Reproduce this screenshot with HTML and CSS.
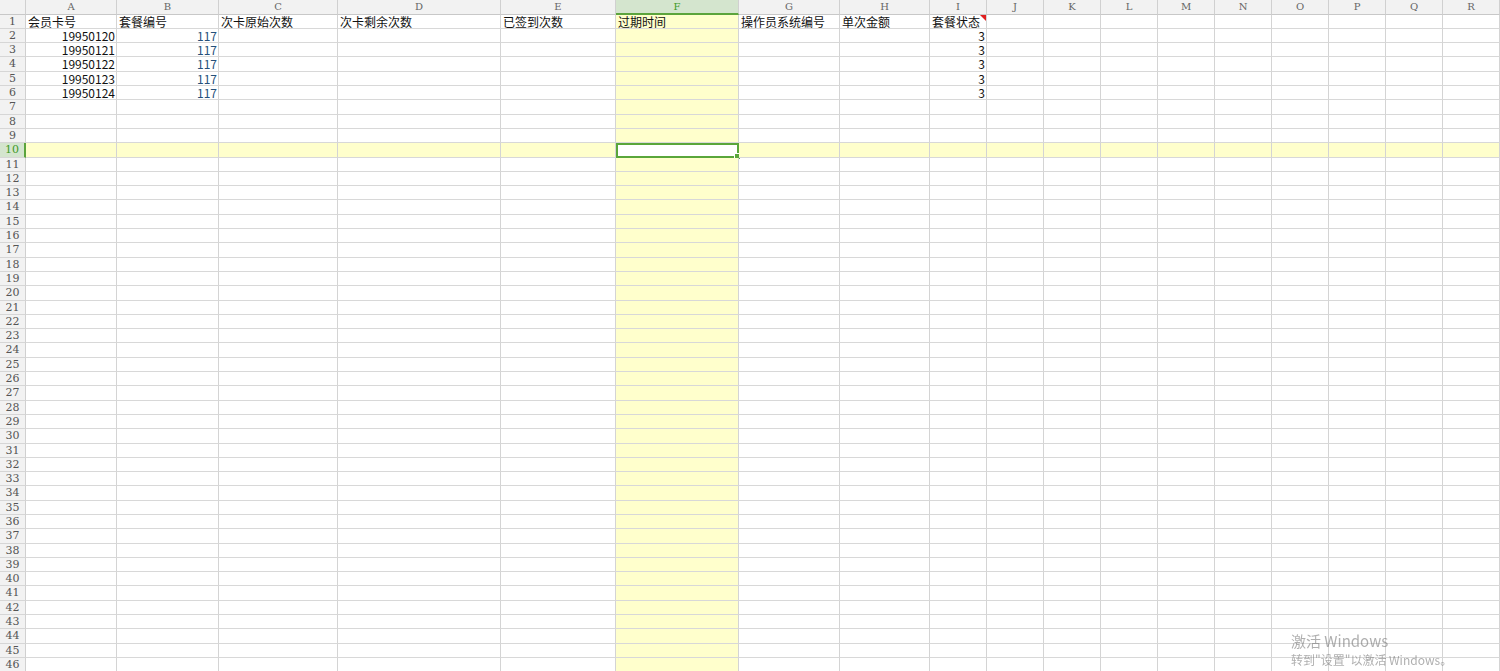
FILE: index.html
```html
<!DOCTYPE html>
<html lang="zh-CN">
<head>
  <meta charset="UTF-8">
  <title>会员套餐表</title>
  <link rel="stylesheet" href="styles.css">
</head>
<body>
<div class="sheet" id="sheet"></div>

<div class="watermark">
  <div class="wm-title">激活 Windows</div>
  <div class="wm-sub">转到"设置"以激活 Windows。</div>
</div>

<script>
  const cols = ["A","B","C","D","E","F","G","H","I","J","K","L","M","N","O","P","Q","R"];
  const header = ["会员卡号","套餐编号","次卡原始次数","次卡剩余次数","已签到次数","过期时间","操作员系统编号","单次金额","套餐状态"];
  const data = [
    ["19950120", "117", "3"],
    ["19950121", "117", "3"],
    ["19950122", "117", "3"],
    ["19950123", "117", "3"],
    ["19950124", "117", "3"]
  ];
  const selCol = 5, selRow = 10;
  const sheet = document.getElementById("sheet");

  function cell(cls, text) {
    const d = document.createElement("div");
    d.className = cls;
    if (text) d.textContent = text;
    sheet.appendChild(d);
    return d;
  }

  // column letters
  cell("corner", "");
  cols.forEach((c, i) => {
    cell("colhead" + (i === selCol ? " active" : ""), c);
  });

  for (let r = 1; r <= 46; r++) {
    cell("rowhead" + (r === selRow ? " active" : ""), String(r));
    cols.forEach((c, i) => {
      let cls = "cell";
      if (i === selCol) cls += " hl";
      if (r === selRow) cls += " hl";
      let text = "";
      if (r === 1 && i < header.length) text = header[i];
      if (r >= 2 && r <= 6) {
        const row = data[r - 2];
        if (i === 0) { text = row[0]; cls += " num"; }
        if (i === 1) { text = row[1]; cls += " num blue"; }
        if (i === 8) { text = row[2]; cls += " num"; }
      }
      if (r === 1 && i === 8) cls += " note";
      if (r === selRow && i === selCol) cls = "cell selected";
      cell(cls, text);
    });
  }
</script>
</body>
</html>
```

FILE: styles.css
```css
body {
  margin: 0;
  overflow: hidden;
  background: #fff;
  font-family: "Noto Sans CJK SC", "Liberation Sans", sans-serif;
}

.sheet {
  display: grid;
  grid-template-columns: 26px 91px 102px 119px 163px 115px 123px 101px 90px repeat(10, 57px);
  grid-template-rows: 14.6px repeat(46, 14.3px);
  width: 1500px;
}

.corner,
.colhead,
.rowhead {
  box-sizing: border-box;
  background: #f2f2f2;
  color: #666;
  font-family: "DejaVu Serif", "Liberation Serif", serif;
  font-size: 10px;
  text-align: center;
  border-right: 1px solid #d0d0d0;
  border-bottom: 1px solid #c8c8c8;
}

.colhead {
  line-height: 14px;
}

.colhead.active {
  background: #d4e5ce;
  color: #3f9a27;
  border-bottom: 2px solid #5ba43c;
}

.rowhead {
  line-height: 14px;
  font-size: 11px;
  color: #555;
  border-bottom-color: #d6d6d6;
}

.rowhead.active {
  background: #d4e5ce;
  color: #3f9a27;
  border-right: 2px solid #5ba43c;
}

.cell {
  box-sizing: border-box;
  position: relative;
  border-right: 1px solid #d4d4d4;
  border-bottom: 1px solid #d8d8d8;
  font-size: 12px;
  line-height: 14px;
  color: #111;
  padding: 0 2px;
  white-space: nowrap;
}

.cell.hl {
  background: #ffffcc;
}

.num {
  text-align: right;
  padding-right: 1px;
}

.blue {
  color: #25507a;
}

.note::after {
  content: "";
  position: absolute;
  top: 0;
  right: 0;
  border-top: 6px solid #e02020;
  border-left: 6px solid transparent;
}

.selected {
  background: #fff;
  border: 2px solid #5aa63a;
}

.selected::after {
  content: "";
  position: absolute;
  right: -4px;
  bottom: -4px;
  width: 5px;
  height: 5px;
  background: #5aa63a;
  border: 1px solid #fff;
}

.watermark {
  position: fixed;
  left: 1291px;
  top: 631px;
  color: rgba(110, 110, 110, 0.55);
  pointer-events: none;
}

.wm-title {
  font-size: 15px;
  line-height: 20px;
}

.wm-sub {
  font-size: 12px;
  line-height: 16px;
  margin-top: 1px;
}
```
